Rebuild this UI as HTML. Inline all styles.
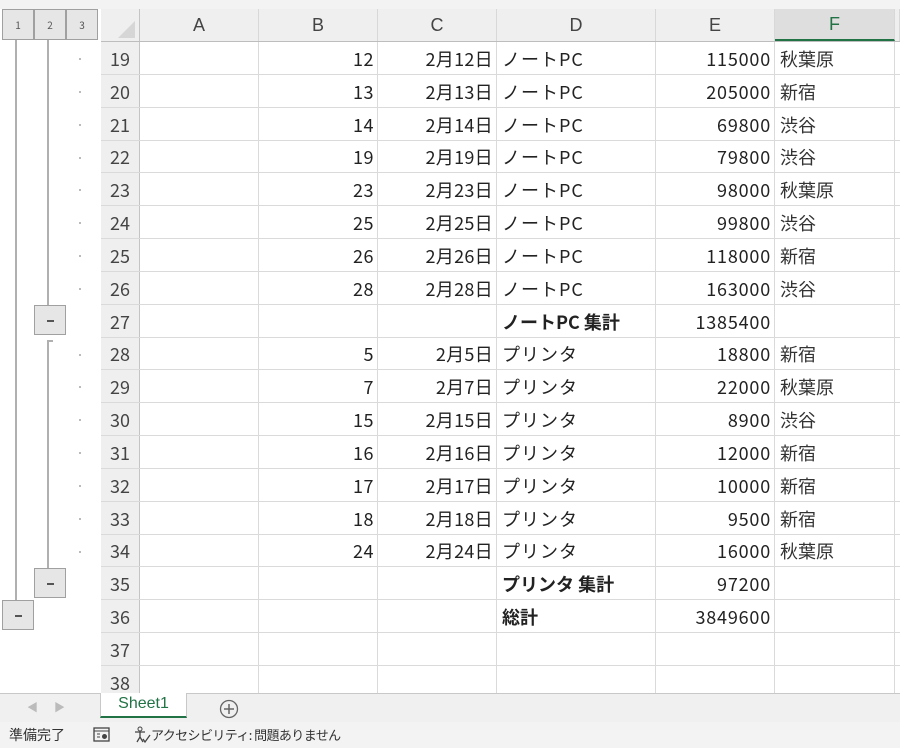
<!DOCTYPE html>
<html><head><meta charset="utf-8"><style>
*{margin:0;padding:0;box-sizing:border-box}
body{width:900px;height:748px;overflow:hidden;background:#fff;position:relative;font-family:"Noto Sans CJK JP","Liberation Sans",sans-serif;color:#222}
.top{position:absolute;left:0;top:0;width:900px;height:9px;background:#f3f3f3}
.outl{position:absolute;left:0;top:9px;width:101px;height:684px;background:#fff}
.lvl{position:absolute;top:9px;width:32px;height:31px;background:#e6e6e6;border:1px solid #a0a0a0;font-size:10px;color:#555;text-align:center;line-height:29px}
.btn{position:absolute;width:32px;height:30px;background:#e6e6e6;border:1px solid #a0a0a0}
.btn:after{content:"";position:absolute;left:12px;top:14px;width:7px;height:2px;background:#555}
.vl{position:absolute;width:2px;background:#b0b0b0}
.dot{position:absolute;left:79px;width:2px;height:2px;background:#bbb}
.row{position:absolute;left:101px;width:799px;display:flex;border-bottom:1px solid #dadada;font-size:18px;line-height:1}
.row>div{flex-shrink:0;height:100%;border-right:1px solid #dadada;white-space:nowrap;display:flex;align-items:center;padding:1px 3px 0 5px}
.rh{width:39px;background:#efefef;border-right:1px solid #c4c4c4!important;justify-content:center;color:#444;padding:1px 0 0!important;font-size:18px}
.a{width:119px}.b{width:119px;justify-content:flex-end;letter-spacing:0.5px}.c{width:119px;justify-content:flex-end;letter-spacing:0.3px}.d{width:159px;letter-spacing:1px}.e{width:119px;justify-content:flex-end;letter-spacing:0.8px}.f{width:120px;color:#333}.g{flex:1;flex-shrink:1!important}
.hdr{position:absolute;left:101px;top:9px;width:799px;height:33px;display:flex;background:#efefef;border-bottom:1px solid #bdbdbd;font-size:18px;color:#444;font-family:"Liberation Sans",sans-serif}
.hdr>div{flex-shrink:0;height:100%;border-right:1px solid #d8d8d8;display:flex;align-items:center;justify-content:center}
.bold{font-weight:bold;letter-spacing:0!important}
.tabs{position:absolute;left:0;top:693px;width:900px;height:29px;background:#f0f0f0;border-top:1px solid #c8c8c8}
.status{position:absolute;left:0;top:722px;width:900px;height:26px;background:#f3f3f3;font-size:13px;color:#333;line-height:1}
</style></head><body>
<div class="top"></div>
<div class="outl"></div>
<div class="lvl" style="left:2px">1</div>
<div class="lvl" style="left:34px">2</div>
<div class="lvl" style="left:66px">3</div>
<div class="vl" style="left:15px;top:40px;height:560px"></div>
<div class="vl" style="left:47px;top:40px;height:265px"></div>
<div class="vl" style="left:47px;top:340px;height:228px"></div>
<div class="vl" style="left:47px;top:340px;height:2px;width:6px"></div>
<div class="btn" style="left:34px;top:305px"></div>
<div class="btn" style="left:34px;top:568px"></div>
<div class="btn" style="left:2px;top:600px"></div>
<div class="dot" style="top:58px"></div><div class="dot" style="top:91px"></div><div class="dot" style="top:124px"></div><div class="dot" style="top:157px"></div><div class="dot" style="top:189px"></div><div class="dot" style="top:222px"></div><div class="dot" style="top:255px"></div><div class="dot" style="top:288px"></div>
<div class="dot" style="top:354px"></div><div class="dot" style="top:386px"></div><div class="dot" style="top:419px"></div><div class="dot" style="top:452px"></div><div class="dot" style="top:485px"></div><div class="dot" style="top:518px"></div><div class="dot" style="top:551px"></div>

<div class="hdr"><div style="width:39px;border-right:1px solid #c4c4c4"><svg width="39" height="33"><polygon points="34,12 34,29 17,29" fill="#d6d6d6"/></svg></div><div style="width:119px">A</div><div style="width:119px">B</div><div style="width:119px">C</div><div style="width:159px">D</div><div style="width:119px">E</div><div style="width:120px;background:#dedede;border-bottom:2px solid #217346;color:#217346">F</div><div style="flex:1"></div></div>

<div class="row" style="top:42px;height:33px"><div class="rh">19</div><div class="a"></div><div class="b">12</div><div class="c">2月12日</div><div class="d">ノートPC</div><div class="e">115000</div><div class="f">秋葉原</div><div class="g"></div></div>
<div class="row" style="top:75px;height:33px"><div class="rh">20</div><div class="a"></div><div class="b">13</div><div class="c">2月13日</div><div class="d">ノートPC</div><div class="e">205000</div><div class="f">新宿</div><div class="g"></div></div>
<div class="row" style="top:108px;height:33px"><div class="rh">21</div><div class="a"></div><div class="b">14</div><div class="c">2月14日</div><div class="d">ノートPC</div><div class="e">69800</div><div class="f">渋谷</div><div class="g"></div></div>
<div class="row" style="top:141px;height:32px"><div class="rh">22</div><div class="a"></div><div class="b">19</div><div class="c">2月19日</div><div class="d">ノートPC</div><div class="e">79800</div><div class="f">渋谷</div><div class="g"></div></div>
<div class="row" style="top:173px;height:33px"><div class="rh">23</div><div class="a"></div><div class="b">23</div><div class="c">2月23日</div><div class="d">ノートPC</div><div class="e">98000</div><div class="f">秋葉原</div><div class="g"></div></div>
<div class="row" style="top:206px;height:33px"><div class="rh">24</div><div class="a"></div><div class="b">25</div><div class="c">2月25日</div><div class="d">ノートPC</div><div class="e">99800</div><div class="f">渋谷</div><div class="g"></div></div>
<div class="row" style="top:239px;height:33px"><div class="rh">25</div><div class="a"></div><div class="b">26</div><div class="c">2月26日</div><div class="d">ノートPC</div><div class="e">118000</div><div class="f">新宿</div><div class="g"></div></div>
<div class="row" style="top:272px;height:33px"><div class="rh">26</div><div class="a"></div><div class="b">28</div><div class="c">2月28日</div><div class="d">ノートPC</div><div class="e">163000</div><div class="f">渋谷</div><div class="g"></div></div>
<div class="row" style="top:305px;height:33px"><div class="rh">27</div><div class="a"></div><div class="b"></div><div class="c"></div><div class="d bold">ノートPC 集計</div><div class="e">1385400</div><div class="f"></div><div class="g"></div></div>
<div class="row" style="top:338px;height:32px"><div class="rh">28</div><div class="a"></div><div class="b">5</div><div class="c">2月5日</div><div class="d">プリンタ</div><div class="e">18800</div><div class="f">新宿</div><div class="g"></div></div>
<div class="row" style="top:370px;height:33px"><div class="rh">29</div><div class="a"></div><div class="b">7</div><div class="c">2月7日</div><div class="d">プリンタ</div><div class="e">22000</div><div class="f">秋葉原</div><div class="g"></div></div>
<div class="row" style="top:403px;height:33px"><div class="rh">30</div><div class="a"></div><div class="b">15</div><div class="c">2月15日</div><div class="d">プリンタ</div><div class="e">8900</div><div class="f">渋谷</div><div class="g"></div></div>
<div class="row" style="top:436px;height:33px"><div class="rh">31</div><div class="a"></div><div class="b">16</div><div class="c">2月16日</div><div class="d">プリンタ</div><div class="e">12000</div><div class="f">新宿</div><div class="g"></div></div>
<div class="row" style="top:469px;height:33px"><div class="rh">32</div><div class="a"></div><div class="b">17</div><div class="c">2月17日</div><div class="d">プリンタ</div><div class="e">10000</div><div class="f">新宿</div><div class="g"></div></div>
<div class="row" style="top:502px;height:33px"><div class="rh">33</div><div class="a"></div><div class="b">18</div><div class="c">2月18日</div><div class="d">プリンタ</div><div class="e">9500</div><div class="f">新宿</div><div class="g"></div></div>
<div class="row" style="top:535px;height:32px"><div class="rh">34</div><div class="a"></div><div class="b">24</div><div class="c">2月24日</div><div class="d">プリンタ</div><div class="e">16000</div><div class="f">秋葉原</div><div class="g"></div></div>
<div class="row" style="top:567px;height:33px"><div class="rh">35</div><div class="a"></div><div class="b"></div><div class="c"></div><div class="d bold">プリンタ 集計</div><div class="e">97200</div><div class="f"></div><div class="g"></div></div>
<div class="row" style="top:600px;height:33px"><div class="rh">36</div><div class="a"></div><div class="b"></div><div class="c"></div><div class="d bold">総計</div><div class="e">3849600</div><div class="f"></div><div class="g"></div></div>
<div class="row" style="top:633px;height:33px"><div class="rh">37</div><div class="a"></div><div class="b"></div><div class="c"></div><div class="d"></div><div class="e"></div><div class="f"></div><div class="g"></div></div>
<div class="row" style="top:666px;height:33px"><div class="rh">38</div><div class="a"></div><div class="b"></div><div class="c"></div><div class="d"></div><div class="e"></div><div class="f"></div><div class="g"></div></div>

<div class="tabs">
<span style="position:absolute;left:27px;top:5px;font-size:11px;color:#bbb">◀</span>
<span style="position:absolute;left:54px;top:5px;font-size:11px;color:#bbb">▶</span>
<div style="position:absolute;left:100px;top:-1px;width:87px;height:25px;background:#fff;border:1px solid #c8c8c8;border-top:none;border-bottom:2px solid #217346;color:#217346;font-size:16px;text-align:center;line-height:22px;font-family:'Liberation Sans',sans-serif">Sheet1</div>
<svg style="position:absolute;left:219px;top:5px" width="20" height="20"><circle cx="10" cy="10" r="8.5" fill="none" stroke="#666" stroke-width="1.3"/><path d="M10 5v10M5 10h10" stroke="#666" stroke-width="1.5"/></svg>
</div>
<div class="status">
<span style="position:absolute;left:9px;top:6px;font-size:14px">準備完了</span>
<svg style="position:absolute;left:93px;top:5px" width="18" height="16"><rect x="1" y="1" width="15" height="13" fill="none" stroke="#444" stroke-width="1.3"/><path d="M1 4h15M4 7h3M4 10h3" stroke="#444"/><circle cx="11.5" cy="9.5" r="2.5" fill="#444"/></svg>
<svg style="position:absolute;left:133px;top:4px" width="18" height="18"><circle cx="7" cy="3" r="2" fill="none" stroke="#444"/><path d="M2 6h10M7 6v5l-3 5M7 11l3 5M10 13l2 3 5-7" fill="none" stroke="#444" stroke-width="1.3"/></svg>
<span style="position:absolute;left:151px;top:6px;letter-spacing:-0.6px">アクセシビリティ: 問題ありません</span>
</div>
</body></html>
